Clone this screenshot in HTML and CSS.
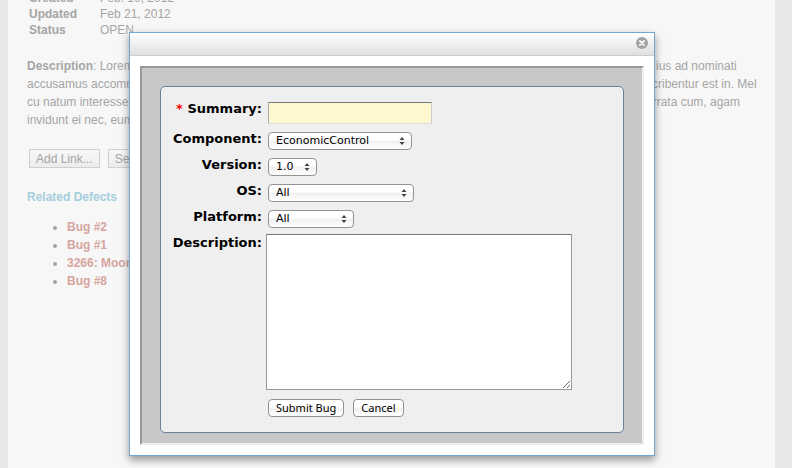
FILE: index.html
```html
<!DOCTYPE html>
<html lang="en">
<head>
<meta charset="utf-8">
<title>Submit Bug</title>
<link rel="stylesheet" href="styles.css">
</head>
<body>
<main class="page">
  <table class="meta">
    <tr><th scope="row">Created</th><td>Feb. 10, 2012</td></tr>
    <tr><th scope="row">Updated</th><td>Feb 21, 2012</td></tr>
    <tr><th scope="row">Status</th><td>OPEN</td></tr>
  </table>
  <div class="summary">
    <p><b>Description</b>: Lorem ipsum dolor sit amet</p><p>e ius ad nominati</p>
    <p>accusamus accommodare</p><p>scribentur est in. Mel</p>
    <p>cu natum interesset</p><p>errata cum, agam</p>
    <p>invidunt ei nec, eum</p>
  </div>
  <div class="actions">
    <button type="button">Add Link...</button>
    <button type="button">Search...</button>
  </div>
  <h2>Related Defects</h2>
  <ul class="defects">
    <li><a href="#">Bug #2</a></li>
    <li><a href="#">Bug #1</a></li>
    <li><a href="#">3266: Moon</a></li>
    <li><a href="#">Bug #8</a></li>
  </ul>
</main>

<div class="overlay">
  <section class="dialog" role="dialog" aria-label="Submit Bug">
    <header class="titlebar">
      <button class="close" type="button" aria-label="Close">
        <svg viewBox="0 0 12 12" width="12" height="12"><circle cx="6" cy="6" r="6" fill="#a3a3a3"/><path d="M3.9 3.9l4.2 4.2M8.1 3.9L3.9 8.1" stroke="#fff" stroke-width="1.7" stroke-linecap="round"/></svg>
      </button>
    </header>
    <div class="frame">
      <form class="panel">
        <label for="summary"><span class="req">*</span> Summary:</label>
        <input id="summary" type="text">
        <label for="component">Component:</label>
        <div class="pick component"><select id="component"><option>EconomicControl</option></select><svg viewBox="0 0 6 8"><path d="M3 0l2.5 3h-5zM3 8l2.5-3h-5z"/></svg></div>
        <label for="version">Version:</label>
        <div class="pick version"><select id="version"><option>1.0</option></select><svg viewBox="0 0 6 8"><path d="M3 0l2.5 3h-5zM3 8l2.5-3h-5z"/></svg></div>
        <label for="os">OS:</label>
        <div class="pick os"><select id="os"><option>All</option></select><svg viewBox="0 0 6 8"><path d="M3 0l2.5 3h-5zM3 8l2.5-3h-5z"/></svg></div>
        <label for="platform">Platform:</label>
        <div class="pick platform"><select id="platform"><option>All</option></select><svg viewBox="0 0 6 8"><path d="M3 0l2.5 3h-5zM3 8l2.5-3h-5z"/></svg></div>
        <label for="description">Description:</label>
        <textarea id="description"></textarea>
        <div class="buttons">
          <button type="submit">Submit Bug</button>
          <button type="button">Cancel</button>
        </div>
      </form>
    </div>
  </section>
</div>
</body>
</html>
```
FILE: styles.css
```css
* { box-sizing: border-box; }
html { height: 100%; }
body {
  margin: 0;
  height: 100%;
  overflow: hidden;
  padding: 0 17px 0 8px;
  background: #e8e8e8;
  font: 12px/18px "Liberation Sans", Arial, sans-serif;
  color: #a5a5a5;
}
.page {
  height: 100%;
  overflow: hidden;
  padding: 0 16px 0 19px;
  background: #f7f7f7;
}
.meta {
  margin: -10px 0 19px 2px;
  border-collapse: collapse;
  line-height: 16px;
}
.meta th { width: 71px; padding: 0; text-align: left; }
.meta td { padding: 0; }
.summary {
  display: grid;
  grid-template-columns: 1fr 113px;
  white-space: nowrap;
}
.summary p { margin: 0; }
.actions {
  display: flex;
  gap: 8px;
  margin: 20px 0 20px 2px;
}
.actions button {
  height: 19px;
  padding: 0 6px;
  border: 1px solid #cfcfcf;
  background: linear-gradient(#f8f8f8, #ececec);
  font: inherit;
  line-height: 16px;
  color: #a5a5a5;
}
h2 {
  margin: 0 0 12px;
  font-size: 12px;
  line-height: 18px;
  color: #a5cedd;
}
.defects { margin: 0; padding-left: 40px; }
.defects a { color: #d5a59e; font-weight: bold; text-decoration: none; }

.overlay {
  position: absolute;
  inset: 0;
  padding: 32px 137px 12px 129px;
}
.dialog {
  display: flex;
  flex-direction: column;
  height: 100%;
  border: 1px solid #72a5cf;
  background: #fff;
  box-shadow: 0 4px 8px rgba(0, 0, 0, .4);
}
.titlebar {
  display: flex;
  justify-content: flex-end;
  align-items: flex-start;
  height: 23px;
  padding: 4px 6px 0;
  border-bottom: 1px solid #ccc;
  background: linear-gradient(#fff, #dfdfdf);
}
.close { display: flex; padding: 0; border: 0; background: none; }
.frame {
  flex: 1;
  display: flex;
  margin: 10px;
  padding: 18px 18px 10px;
  border: 2px solid;
  border-color: #999 #eee #eee #999;
  background: #c8c8c8;
}
.panel {
  flex: 1;
  display: grid;
  grid-template-columns: 101px 1fr;
  grid-template-rows: 30px repeat(4, 26px) 156px 1fr;
  padding: 13px 51px 10px 0;
  border: 1px solid #6b7f99;
  border-radius: 5px;
  background: #efefef;
  color: #000;
}
.panel label {
  text-align: right;
  white-space: nowrap;
  font: bold 13px/18px "DejaVu Sans", Verdana, sans-serif;
}
.req { color: #f00; }
.panel input {
  width: 164px;
  height: 22px;
  margin: 2px 0 0 6px;
  border: 1px solid;
  border-color: #777 #ccc #ddd #aaa;
  background: #fff7d0;
}
.pick {
  display: flex;
  align-items: center;
  height: 18px;
  margin: 2px 0 0 6px;
  border: 1px solid #939393;
  border-radius: 4px;
  background: linear-gradient(#fff, #fff 45%, #f0f0f0 50%, #fff);
}
.pick svg { width: 6px; height: 8px; margin-right: 6px; fill: #444; }
.pick select {
  flex: 1;
  min-width: 0;
  height: 16px;
  padding: 0 0 0 7px;
  border: 0;
  background: none;
  appearance: none;
  font: 11px/16px "DejaVu Sans", sans-serif;
  color: #000;
}
.component { width: 144px; }
.version { width: 49px; }
.os { width: 146px; }
.platform { width: 86px; }
.panel textarea {
  height: 156px;
  margin: 0 0 0 4px;
  border: 1px solid #999;
  border-top-color: #777;
  background: #fff;
}
.buttons {
  grid-column: 2;
  display: flex;
  align-items: flex-start;
  gap: 9px;
  padding: 9px 0 0 6px;
}
.buttons button {
  height: 18px;
  padding: 0 7px;
  border: 1px solid #939393;
  border-radius: 4px;
  background: linear-gradient(#fff, #fff 45%, #f0f0f0 50%, #fff);
  font: 11px/16px "Noto Sans", sans-serif;
  color: #000;
}
```
